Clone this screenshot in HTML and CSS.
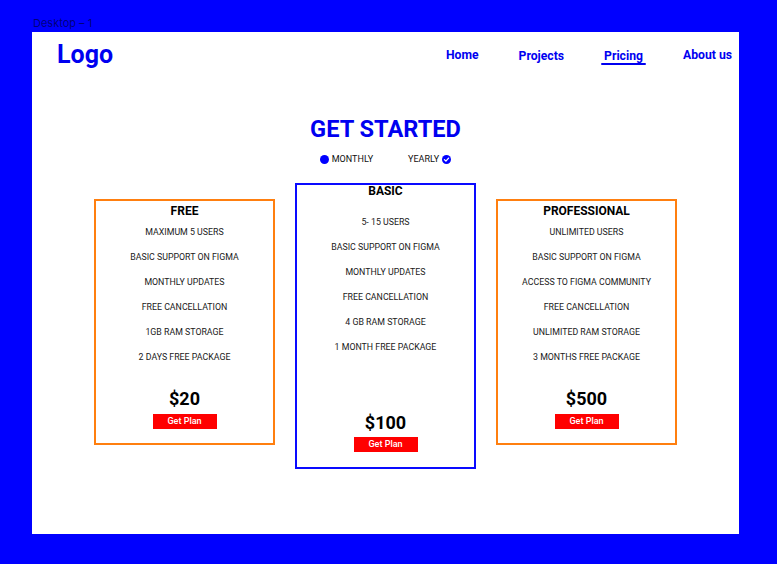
FILE: index.html
```html
<!DOCTYPE html>
<html lang="en">
<head>
<meta charset="utf-8">
<title>Desktop – 1</title>
<link rel="stylesheet" href="styles.css">
</head>
<body>
  <div class="label">Desktop – 1</div>
  <div class="frame">
    <header class="header">
      <div class="logo">Logo</div>
      <nav class="nav">
        <a href="#" class="nav-link">Home</a>
        <a href="#" class="nav-link low">Projects</a>
        <a href="#" class="nav-link low active">Pricing</a>
        <a href="#" class="nav-link">About us</a>
      </nav>
    </header>

    <section class="hero">
      <h1 class="title">GET STARTED</h1>
      <div class="toggle">
        <div class="opt"><span class="dot"></span><span>MONTHLY</span></div>
        <div class="opt"><span>YEARLY</span>
          <svg class="check" width="9" height="9" viewBox="0 0 9 9"><circle cx="4.5" cy="4.5" r="4.5" fill="#0000ff"/><path d="M2.4 4.6 L3.9 6.1 L6.6 3.1" fill="none" stroke="#fff" stroke-width="1.3" stroke-linecap="round" stroke-linejoin="round"/></svg>
        </div>
      </div>
    </section>

    <section class="cards">
      <div class="card std">
        <h2 class="card-title">FREE</h2>
        <ul class="features">
          <li>MAXIMUM 5 USERS</li>
          <li>BASIC SUPPORT ON FIGMA</li>
          <li>MONTHLY UPDATES</li>
          <li>FREE CANCELLATION</li>
          <li>1GB RAM STORAGE</li>
          <li>2 DAYS FREE PACKAGE</li>
        </ul>
        <div class="price">$20</div>
        <button class="btn">Get Plan</button>
      </div>

      <div class="card featured">
        <h2 class="card-title">BASIC</h2>
        <ul class="features">
          <li>5- 15 USERS</li>
          <li>BASIC SUPPORT ON FIGMA</li>
          <li>MONTHLY UPDATES</li>
          <li>FREE CANCELLATION</li>
          <li>4 GB RAM STORAGE</li>
          <li>1 MONTH FREE PACKAGE</li>
        </ul>
        <div class="price">$100</div>
        <button class="btn">Get Plan</button>
      </div>

      <div class="card std">
        <h2 class="card-title">PROFESSIONAL</h2>
        <ul class="features">
          <li>UNLIMITED USERS</li>
          <li>BASIC SUPPORT ON FIGMA</li>
          <li>ACCESS TO FIGMA COMMUNITY</li>
          <li>FREE CANCELLATION</li>
          <li>UNLIMITED RAM STORAGE</li>
          <li>3 MONTHS FREE PACKAGE</li>
        </ul>
        <div class="price">$500</div>
        <button class="btn">Get Plan</button>
      </div>
    </section>
  </div>
</body>
</html>
```

FILE: styles.css
```css
* { box-sizing: border-box; }

html, body {
  margin: 0;
  height: 100%;
}

body {
  background: #0000ff;
  padding: 17px 0 0 32px;
  font-family: Roboto, "Liberation Sans", sans-serif;
  overflow: hidden;
}

.label {
  font: 400 11px/13px Inter, "Noto Sans", sans-serif;
  color: rgba(0, 0, 0, 0.55);
  margin-left: 1px;
}

.frame {
  margin-top: 2px;
  width: 707px;
  height: 502px;
  background: #ffffff;
}

.header {
  display: flex;
  justify-content: space-between;
  align-items: flex-start;
  padding: 9px 7px 0 25px;
}

.logo {
  font: 700 25px/28px Roboto, sans-serif;
  color: #0000f0;
}

.nav {
  display: flex;
  align-items: flex-start;
  gap: 40px;
  margin-top: 6.5px;
}

.nav-link {
  font: 700 12.2px/15px Roboto, sans-serif;
  color: #0000f0;
  text-decoration: none;
}

.nav-link.low {
  margin-top: 1.7px;
}

.nav-link.active {
  display: flex;
  flex-direction: column;
}

.nav-link.active::after {
  content: "";
  display: block;
  height: 2.2px;
  margin: -1px -3px 0;
  background: #0000f0;
  border-radius: 2px;
}

.hero {
  margin-top: 47px;
  text-align: center;
}

.title {
  margin: 0;
  font: 700 23.6px/27px Roboto, sans-serif;
  color: #0000f0;
}

.toggle {
  display: flex;
  justify-content: center;
  gap: 35px;
  margin-top: 11px;
  font: 400 9px/11px Roboto, sans-serif;
  color: #111;
}

.opt {
  display: flex;
  align-items: center;
  gap: 3px;
}

.dot {
  width: 9px;
  height: 9px;
  border-radius: 50%;
  background: #0000ff;
}

.check {
  display: block;
}

.cards {
  display: flex;
  justify-content: center;
  align-items: flex-start;
  gap: 20px;
  margin-top: 17.5px;
}

.card {
  width: 181px;
  border: 2px solid #ff7f0f;
  display: flex;
  flex-direction: column;
  align-items: center;
  text-align: center;
  padding-bottom: 14.5px;
}

.card.std {
  height: 246px;
  margin-top: 16.6px;
  padding-top: 3.5px;
}

.card.featured {
  height: 286px;
  border-color: #0a0aff;
  padding-top: 0;
}

.card-title {
  margin: 0 0 3px;
  font: 700 12px/12px Roboto, sans-serif;
  color: #000;
}

.featured .card-title {
  margin-bottom: 13px;
}

.features {
  list-style: none;
  margin: 0;
  padding: 0;
}

.features li {
  font: 400 8.8px/25px Roboto, sans-serif;
  color: #1a1a1a;
}

.price {
  margin-top: auto;
  font: 700 18px/21px Roboto, sans-serif;
  color: #000;
}

.btn {
  margin-top: 4.5px;
  width: 64px;
  height: 15px;
  padding: 0;
  border: none;
  background: #ff0000;
  color: #fff;
  font: 500 9px/15px Roboto, sans-serif;
}
```
